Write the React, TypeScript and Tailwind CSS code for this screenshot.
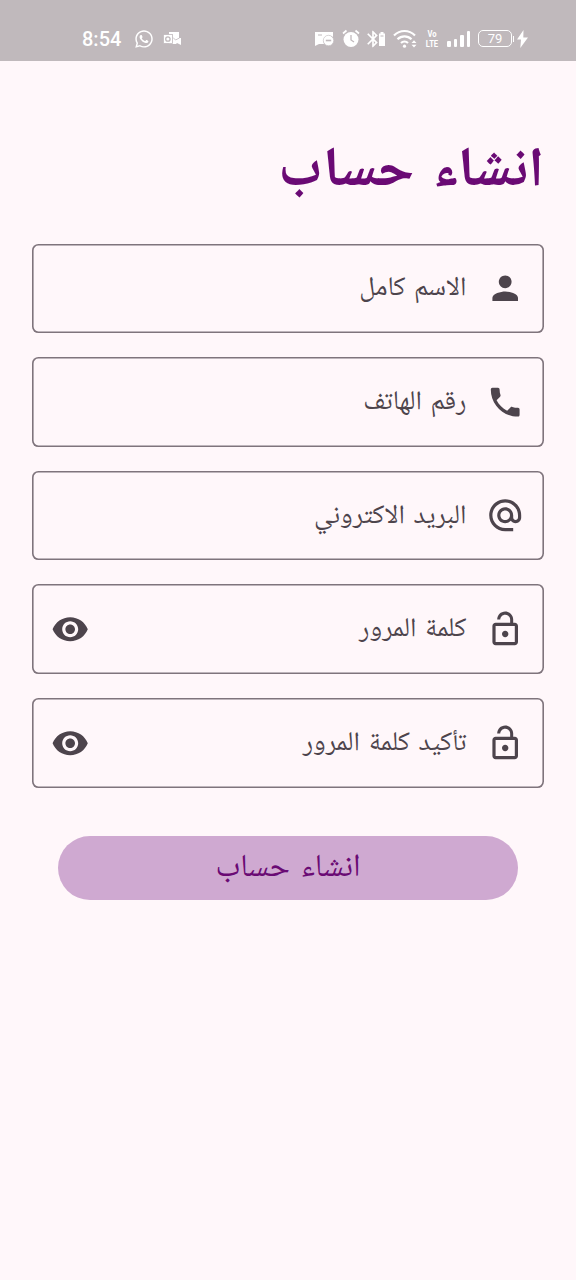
import type { ReactNode } from "react";
import { MdAlternateEmail, MdLockOpen, MdPerson, MdPhone, MdRemoveRedEye, MdBluetooth } from "react-icons/md";
import { FaWhatsapp } from "react-icons/fa";

type FieldProps = { label: string; icon: ReactNode; secret?: boolean };

function Field({ label, icon, secret }: FieldProps) {
  return (
    <div className="flex h-[89.6px] items-center rounded-[6.4px] px-[19.2px] text-[#4d444c] shadow-[inset_0_0_0_1.6px_#7f747c]">
      <span className="flex size-[38.4px] shrink-0 items-center justify-center">{icon}</span>
      <span className="mr-[20px] pt-[2px] text-[27px] leading-[38px] [word-spacing:2.5px] whitespace-nowrap">{label}</span>
      {secret && <MdRemoveRedEye className="mr-auto size-[38.4px]" />}
    </div>
  );
}

function StatusBar() {
  return (
    <header dir="ltr" className="flex h-[61px] items-center bg-[#c0b9bc] pt-[16px] pl-[82px] font-['Roboto',sans-serif] text-white">
      <span className="w-[52px] text-[20px] leading-6 font-medium">8:54</span>
      <FaWhatsapp className="size-[20px] shrink-0" />
      <svg viewBox="0 0 18 16" className="ml-[9px] h-4 w-[18px] shrink-0" fill="none">
        <path d="M6 1h10v6l2 0v7l-4-2-1 1H6z" fill="white" />
        <path d="M10 6.500l2.500 2.500 4-2" stroke="#c0b9bc" strokeWidth=".8" />
        <rect x=".4" y="3.500" width="9" height="9" fill="white" stroke="#c0b9bc" strokeWidth=".8" />
        <circle cx="4.900" cy="8" r="2.200" stroke="#c0b9bc" strokeWidth="1.300" />
      </svg>
      <svg viewBox="0 0 19 16" className="ml-[134px] h-4 w-[19px] shrink-0">
        <path d="M0 1h18v5a6 6 0 0 0-9 7H4l-4 2z" fill="white" />
        <path d="M3 4h4" stroke="#c0b9bc" />
        <circle cx="13.500" cy="9.500" r="5.200" fill="white" stroke="#c0b9bc" strokeWidth=".6" />
        <path d="M10.800 9.500h5.400" stroke="#c0b9bc" strokeWidth="1.600" />
      </svg>
      <svg viewBox="0 0 18 19" className="ml-[8px] h-[19px] w-[18px] shrink-0" fill="none">
        <circle cx="9" cy="10.500" r="7.500" fill="white" />
        <path d="M1 4.500 4.500 1.500M17 4.500 13.500 1.500" stroke="white" strokeWidth="1.700" />
        <path d="M9 6v5l3 2" stroke="#c0b9bc" strokeWidth="1.300" />
      </svg>
      <MdBluetooth className="ml-[3px] size-[20px] shrink-0" />
      <svg viewBox="0 0 6 14" className="-ml-[4px] mt-px h-[14px] w-[6px] shrink-0">
        <path d="M1.500 0h3v1.500H6V14H0V1.500h1.500z" fill="white" />
        <path d="M1.500 4h3" stroke="#c0b9bc" />
      </svg>
      <svg viewBox="0 0 26 20" className="ml-[8px] h-5 w-[26px] shrink-0" fill="none">
        <path d="M1 6.500C7 .5 16 .5 22 6.500M4.500 10.300c4-4 10-4 14 0M8 14c2-2 5-2 7 0" stroke="white" strokeWidth="2.200" />
        <circle cx="11.500" cy="17.200" r="1.600" fill="white" />
        <path d="M18.500 14l2.500-2.800 2.500 2.800zM18.500 15.800l2.500 2.800 2.500-2.800z" fill="white" />
      </svg>
      <span className="ml-[6px] flex w-[14px] shrink-0 scale-x-[0.8] flex-col items-center text-[9.5px] leading-[9.5px] font-bold">
        <span>Vo</span>
        <span>LTE</span>
      </span>
      <div className="ml-[8px] flex h-4 w-[23px] shrink-0 items-end gap-[3px]">
        <i className="h-[6px] w-[3.5px] rounded-[1px] bg-white" />
        <i className="h-[8px] w-[3.5px] rounded-[1px] bg-white" />
        <i className="h-[12px] w-[3.5px] rounded-[1px] bg-white" />
        <i className="h-[16px] w-[3.5px] rounded-[1px] bg-white" />
      </div>
      <span className="ml-[8px] flex h-[17px] w-[34px] shrink-0 items-center justify-center rounded-[5px] border border-white text-[13px]">79</span>
      <i className="ml-px h-[6px] w-px shrink-0 bg-white" />
      <svg viewBox="0 0 11 18" className="ml-[3px] h-[18px] w-[11px] shrink-0">
        <path d="M6.500 0 0 9.500h4L3.300 18 11 7.500H6.300z" fill="white" />
      </svg>
    </header>
  );
}

export default function App() {
  const icon = "size-[38.4px]";
  return (
    <div dir="rtl" className="flex h-[1280px] w-[576px] flex-col overflow-hidden bg-[#fff7fa] font-['Noto_Naskh_Arabic_UI','Noto_Naskh_Arabic','DejaVu_Sans',sans-serif]">
      <StatusBar />
      <main className="flex flex-col px-8">
        <h1 className="mt-[72px] h-[76px] text-[55.8px] leading-[76px] font-bold [word-spacing:6px] whitespace-nowrap text-[#6a0a74]">انشاء حساب</h1>
        <form className="mt-[34.6px] flex flex-col gap-6">
          <Field label="الاسم كامل" icon={<MdPerson className={icon} />} />
          <Field label="رقم الهاتف" icon={<MdPhone className={icon} />} />
          <Field label="البريد الاكتروني" icon={<MdAlternateEmail className={icon} />} />
          <Field label="كلمة المرور" icon={<MdLockOpen className={icon} />} secret />
          <Field label="تأكيد كلمة المرور" icon={<MdLockOpen className={icon} />} secret />
          <button type="button" className="mx-[25.6px] mt-6 flex h-16 items-center justify-center rounded-full bg-[#cfa9d1] pt-px text-[32px] leading-[40px] [word-spacing:4px] text-[#6a0a74]">
            <span>انشاء حساب</span>
          </button>
        </form>
      </main>
    </div>
  );
}
